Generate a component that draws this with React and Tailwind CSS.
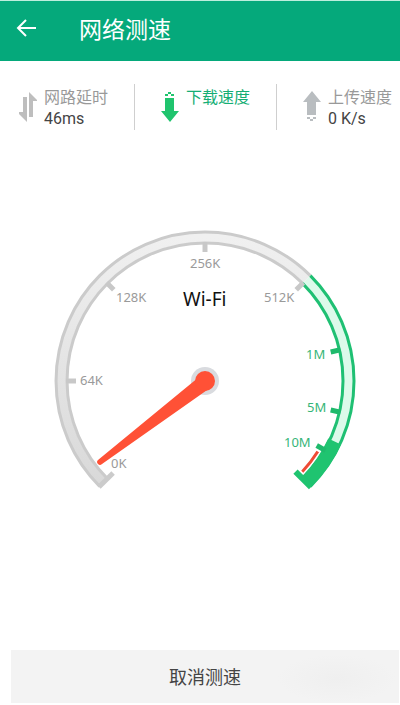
const CX = 150
const CY = 150

const polar = (r, deg) => {
  const rad = (deg * Math.PI) / 180
  return [CX + r * Math.cos(rad), CY - r * Math.sin(rad)]
}

// clockwise arc, angles measured counter-clockwise from the right
const arc = (r, from, to) => {
  const [x1, y1] = polar(r, from)
  const [x2, y2] = polar(r, to)
  const large = from - to > 180 ? 1 : 0
  return `M${x1} ${y1}A${r} ${r} 0 ${large} 1 ${x2} ${y2}`
}

const ticks = [
  { label: '64K', deg: 180, x: 25, y: 154, color: '#c8c8c8' },
  { label: '128K', deg: 135, x: 61, y: 71, color: '#c8c8c8' },
  { label: '256K', deg: 90, x: 135, y: 37, color: '#c8c8c8' },
  { label: '512K', deg: 45, x: 209, y: 71, color: '#c8c8c8' },
  { label: '1M', deg: 13, x: 251, y: 128, color: '#1fba6c' },
  { label: '5M', deg: -13, x: 252, y: 181, color: '#1fba6c' },
  { label: '10M', deg: -30, x: 229, y: 216, color: '#1fba6c' },
]

function Tick({ deg, from = 129, to = 139, color, width = 5 }) {
  const [x1, y1] = polar(from, deg)
  const [x2, y2] = polar(to, deg)
  return <line x1={x1} y1={y1} x2={x2} y2={y2} stroke={color} strokeWidth={width} />
}

function Gauge() {
  return (
    <svg
      viewBox="0 0 300 260"
      className="w-full overflow-visible font-['Noto_Sans',sans-serif] text-[13px]"
      role="img"
      aria-label="Wi-Fi"
    >
      <defs>
        <linearGradient id="track" x1="0" y1="0" x2="0" y2="1">
          <stop offset="0" stopColor="#f0f0f0" />
          <stop offset="1" stopColor="#d9d9d9" />
        </linearGradient>
      </defs>

      {/* Grey part of the ring */}
      <path d={arc(144, 225, 45)} fill="none" stroke="url(#track)" strokeWidth="10" />
      <path d={arc(149, 225, 45)} fill="none" stroke="#cbcbcb" strokeWidth="3" />
      <path d={arc(138, 225, 45)} fill="none" stroke="#cbcbcb" strokeWidth="3" />
      <Tick deg={225} from={130} to={150} color="#cbcbcb" />

      {/* Green part of the ring */}
      <path d={arc(144, 45, -45)} fill="none" stroke="#dcfaea" strokeWidth="10" />
      <path d={arc(149, 45, -45)} fill="none" stroke="#1fc073" strokeWidth="3" />
      <path d={arc(138, 45, -45)} fill="none" stroke="#1fc073" strokeWidth="3" />
      <path d={arc(143, -25, -45)} fill="none" stroke="#1fc470" strokeWidth="14" />
      <Tick deg={-45} from={128} to={150} color="#1fc470" width={6} />
      <path d={arc(133, -32, -43)} fill="none" stroke="#fff" strokeWidth="5" />
      <path d={arc(133, -32, -43)} fill="none" stroke="#ee4b36" strokeWidth="3" />

      {ticks.map((t) => (
        <g key={t.label}>
          <Tick deg={t.deg} color={t.color} />
          <text x={t.x} y={t.y} fill={t.deg < 45 ? '#35b578' : '#9a9a9a'}>
            {t.label}
          </text>
        </g>
      ))}
      <text x="56" y="237" fill="#9a9a9a">0K</text>
      <text x="128" y="75" fill="#111" className="text-[19px]">Wi-Fi</text>

      {/* Needle */}
      <circle cx={CX} cy={CY} r="14" fill="#d9dbdf" />
      <path d="M144 146L43 229Q41 231 43 233Q45 235 47 233L155 157Z" fill="#ff5136" />
      <circle cx={CX} cy={CY} r="10" fill="#ff5136" />
    </svg>
  )
}

function DelayIcon() {
  return (
    <svg width="18" height="32" viewBox="0 0 18 32" fill="#bebebe" className="shrink-0">
      <path d="M4 6H8V31L-1 22V21H4Z" />
      <path d="M10 1L18 9V10H14V26H10Z" />
    </svg>
  )
}

function DownIcon() {
  return (
    <svg width="18" height="32" viewBox="0 0 18 32" fill="#20c46e" className="shrink-0">
      <path d="M4 7H13V20H18L9 31L0 20H4Z" />
      <path d="M4 3H7V5H4ZM7 1H10V3H7ZM10 3H13V5H10Z" />
    </svg>
  )
}

function UpIcon() {
  return (
    <svg width="18" height="32" viewBox="0 0 18 32" fill="#b9bdc0" className="shrink-0">
      <path d="M9 0L18 11H13V24H4V11H0Z" />
      <path d="M4 26H7V28H4ZM7 28H10V30H7ZM10 26H13V28H10Z" />
    </svg>
  )
}

function Stat({ icon, label, value, active }) {
  return (
    <div className="flex items-center gap-[7px]">
      {icon}
      <dl className="whitespace-nowrap">
        <dt className={`h-[22px] text-[16px] leading-[22px] ${active ? 'text-[#15ae75]' : 'text-[#999]'}`}>
          {label}
        </dt>
        <dd className="h-[22px] text-[16px] leading-6 text-[#444] font-[Roboto,sans-serif]">{value}</dd>
      </dl>
    </div>
  )
}

export default function App() {
  return (
    <div className="flex min-h-screen flex-col bg-white font-['Noto_Sans_CJK_SC',sans-serif]">
      <header className="flex h-[61px] items-center border-t border-[#bdeedd] bg-[#05a97b] pb-[6px] pl-4 text-white">
        <button type="button" aria-label="返回" className="flex w-[63px] items-center">
          <svg width="20" height="20" viewBox="0 0 20 20" fill="none" stroke="currentColor" strokeWidth="2">
            <path d="M10 2L2 10L10 18M2 10H20" />
          </svg>
        </button>
        <h1 className="text-[23px] leading-8">网络测速</h1>
      </header>

      <section className="mt-[23px] grid h-[46px] grid-cols-[135fr_142fr_123fr]">
        <div className="flex items-center border-r border-[#cfcfcf] pl-[19px]">
          <Stat icon={<DelayIcon />} label="网路延时" value="46ms" />
        </div>
        <div className="flex items-center border-r border-[#cfcfcf] pl-[26px]">
          <Stat icon={<DownIcon />} label="下载速度" value="" active />
        </div>
        <div className="flex items-center pl-[26px]">
          <Stat icon={<UpIcon />} label="上传速度" value="0 K/s" />
        </div>
      </section>

      <main className="mt-[101px] flex-1 pr-[45px] pl-[55px]">
        <Gauge />
      </main>

      <footer className="pr-px pb-[2px] pl-[11px]">
        <button
          type="button"
          className="h-[53px] w-full bg-[#f3f3f3] bg-[radial-gradient(ellipse_60px_24px_at_84%_54%,#efefef,#f3f3f3)] text-[18px] text-[#444]"
        >
          取消测速
        </button>
      </footer>
    </div>
  )
}
